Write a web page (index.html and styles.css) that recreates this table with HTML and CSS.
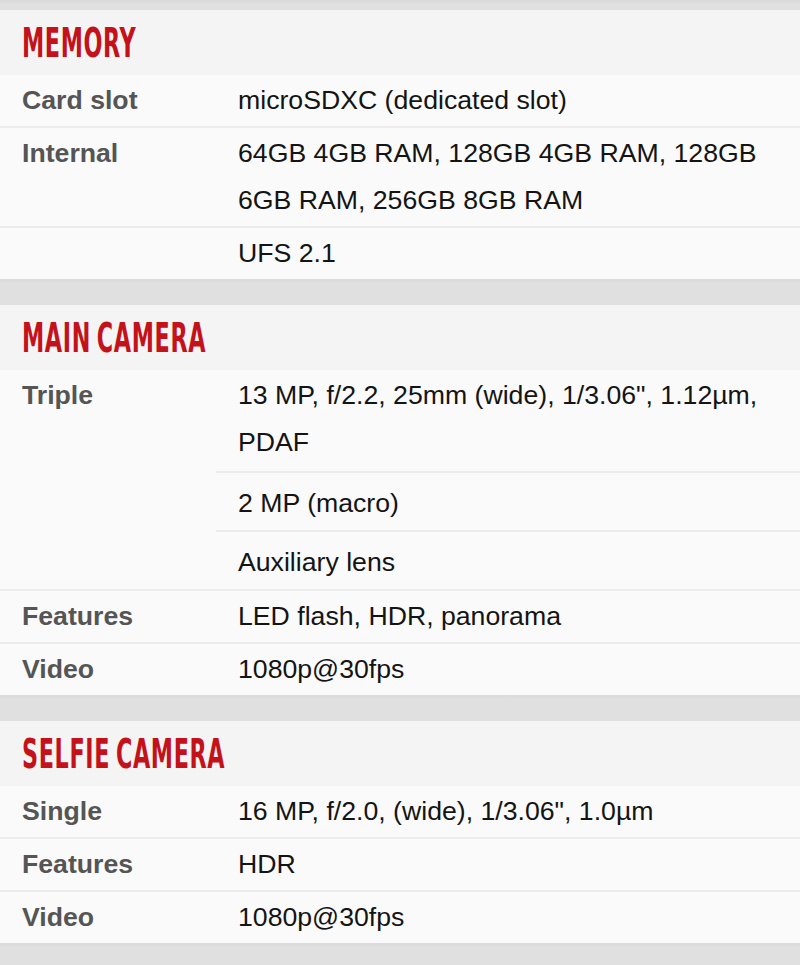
FILE: index.html
```html
<!DOCTYPE html>
<html>
<head>
<meta charset="utf-8">
<link rel="stylesheet" href="styles.css">
</head>
<body>
<div class="page">
  <div class="band band-top"></div>
  <section class="spec">
    <h2 class="spec-title"><span>MEMORY</span></h2>
    <div class="row">
      <div class="label">Card slot</div>
      <div class="values"><div class="val">microSDXC (dedicated slot)</div></div>
    </div>
    <div class="row">
      <div class="label">Internal</div>
      <div class="values"><div class="val">64GB 4GB RAM, 128GB 4GB RAM, 128GB 6GB RAM, 256GB 8GB RAM</div></div>
    </div>
    <div class="row">
      <div class="label"></div>
      <div class="values"><div class="val">UFS 2.1</div></div>
    </div>
  </section>
  <div class="band"></div>
  <section class="spec">
    <h2 class="spec-title"><span>MAIN CAMERA</span></h2>
    <div class="row">
      <div class="label">Triple</div>
      <div class="values">
        <div class="val first">13 MP, f/2.2, 25mm (wide), 1/3.06", 1.12µm, PDAF</div>
        <div class="val sub">2 MP (macro)</div>
        <div class="val sub">Auxiliary lens</div>
      </div>
    </div>
    <div class="row">
      <div class="label">Features</div>
      <div class="values"><div class="val">LED flash, HDR, panorama</div></div>
    </div>
    <div class="row">
      <div class="label">Video</div>
      <div class="values"><div class="val">1080p@30fps</div></div>
    </div>
  </section>
  <div class="band"></div>
  <section class="spec">
    <h2 class="spec-title"><span>SELFIE CAMERA</span></h2>
    <div class="row">
      <div class="label">Single</div>
      <div class="values"><div class="val">16 MP, f/2.0, (wide), 1/3.06", 1.0µm</div></div>
    </div>
    <div class="row">
      <div class="label">Features</div>
      <div class="values"><div class="val">HDR</div></div>
    </div>
    <div class="row">
      <div class="label">Video</div>
      <div class="values"><div class="val">1080p@30fps</div></div>
    </div>
  </section>
  <div class="band band-bottom"></div>
</div>
</body>
</html>
```

FILE: styles.css
```css
html, body {
  margin: 0;
  padding: 0;
  background: #dfdfdf;
}
.page {
  width: 800px;
  font-family: "Liberation Sans", Arial, sans-serif;
  font-size: 26.67px;
}
.band {
  height: 26px;
  background: linear-gradient(#d9d9d9, #e0e0e0 4px, #e0e0e0);
}
.band-top {
  height: 10px;
}
.band-bottom {
  height: 30px;
}
.spec {
  background: #fafafa;
}
.spec-title {
  margin: 0;
  height: 65px;
  background: #f4f4f4;
  padding-left: 22px;
  display: flex;
  align-items: center;
  font-family: "DejaVu Sans Condensed", "Liberation Sans Narrow", sans-serif;
  font-weight: bold;
  font-size: 40px;
  color: #c4121b;
  overflow: hidden;
}
.spec-title span {
  display: inline-block;
  transform: scaleX(0.62);
  transform-origin: left center;
  white-space: nowrap;
  letter-spacing: 1px;
  word-spacing: -4px;
}
.row {
  display: flex;
  border-bottom: 2px solid #ececec;
}
.row:last-child {
  border-bottom: none;
}
.label {
  width: 216px;
  flex: none;
  box-sizing: border-box;
  padding: 2px 0 2px 22px;
  line-height: 47px;
  font-weight: bold;
  color: #555;
}
.values {
  flex: 1;
  min-width: 0;
}
.val {
  padding: 2px 12px 2px 22px;
  line-height: 47px;
  color: #141414;
}
.val.first {
  padding-bottom: 5px;
}
.val + .val {
  border-top: 2px solid #ececec;
}
.val.sub {
  padding-top: 7px;
  padding-bottom: 3px;
}
```
